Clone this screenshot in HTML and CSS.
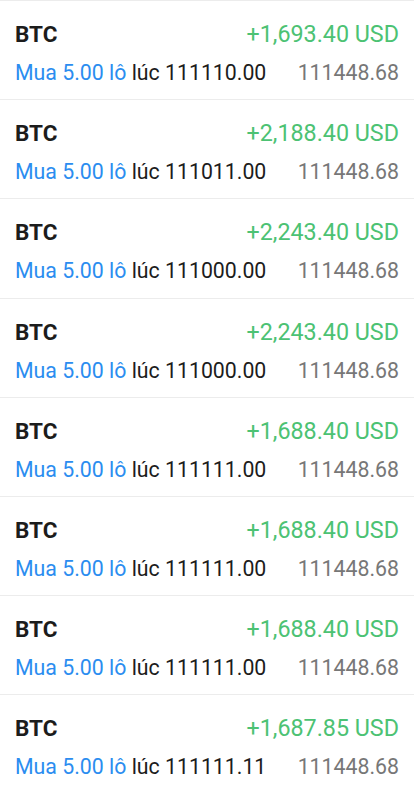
FILE: index.html
```html
<!doctype html>
<html>
  <head>
    <title>Lệnh</title>
    <meta charset="utf-8">
    <meta name="viewport" content="width=device-width, initial-scale=1">
    <link rel="stylesheet" href="styles.css">
  </head>
  <body>
    <ul class="orders">
      <li class="order">
        <div class="line top"><span class="symbol">BTC</span><span class="profit">+1,693.40 USD</span></div>
        <div class="line"><span><span class="side">Mua 5.00 lô</span> lúc 111110.00</span><span class="price">111448.68</span></div>
      </li>
      <li class="order">
        <div class="line top"><span class="symbol">BTC</span><span class="profit">+2,188.40 USD</span></div>
        <div class="line"><span><span class="side">Mua 5.00 lô</span> lúc 111011.00</span><span class="price">111448.68</span></div>
      </li>
      <li class="order">
        <div class="line top"><span class="symbol">BTC</span><span class="profit">+2,243.40 USD</span></div>
        <div class="line"><span><span class="side">Mua 5.00 lô</span> lúc 111000.00</span><span class="price">111448.68</span></div>
      </li>
      <li class="order">
        <div class="line top"><span class="symbol">BTC</span><span class="profit">+2,243.40 USD</span></div>
        <div class="line"><span><span class="side">Mua 5.00 lô</span> lúc 111000.00</span><span class="price">111448.68</span></div>
      </li>
      <li class="order">
        <div class="line top"><span class="symbol">BTC</span><span class="profit">+1,688.40 USD</span></div>
        <div class="line"><span><span class="side">Mua 5.00 lô</span> lúc 111111.00</span><span class="price">111448.68</span></div>
      </li>
      <li class="order">
        <div class="line top"><span class="symbol">BTC</span><span class="profit">+1,688.40 USD</span></div>
        <div class="line"><span><span class="side">Mua 5.00 lô</span> lúc 111111.00</span><span class="price">111448.68</span></div>
      </li>
      <li class="order">
        <div class="line top"><span class="symbol">BTC</span><span class="profit">+1,688.40 USD</span></div>
        <div class="line"><span><span class="side">Mua 5.00 lô</span> lúc 111111.00</span><span class="price">111448.68</span></div>
      </li>
      <li class="order">
        <div class="line top"><span class="symbol">BTC</span><span class="profit">+1,687.85 USD</span></div>
        <div class="line"><span><span class="side">Mua 5.00 lô</span> lúc 111111.11</span><span class="price">111448.68</span></div>
      </li>
    </ul>
  </body>
</html>
```

FILE: styles.css
```css
body {
  margin: 0;
  background: white;
  font-family: Roboto, sans-serif;
  color: #1c1c1c;
}
.orders {
  list-style: none;
  margin: 0;
  padding: 0;
  border-top: 1px solid #ececec;
}
.order {
  box-sizing: border-box;
  height: 99.2px;
  padding: 14px 15px 0;
  border-bottom: 1px solid #ececec;
}
.order:last-child {
  border-bottom: 0;
}
.line {
  display: flex;
  justify-content: space-between;
  align-items: baseline;
  font-size: 21.3px;
  line-height: 40px;
}
.line.top {
  line-height: 38px;
}
.symbol {
  font-weight: bold;
  font-size: 22.5px;
}
.profit {
  color: #4cc273;
  font-size: 23.3px;
}
.side {
  color: #2b8df0;
}
.price {
  color: #777777;
}
```
